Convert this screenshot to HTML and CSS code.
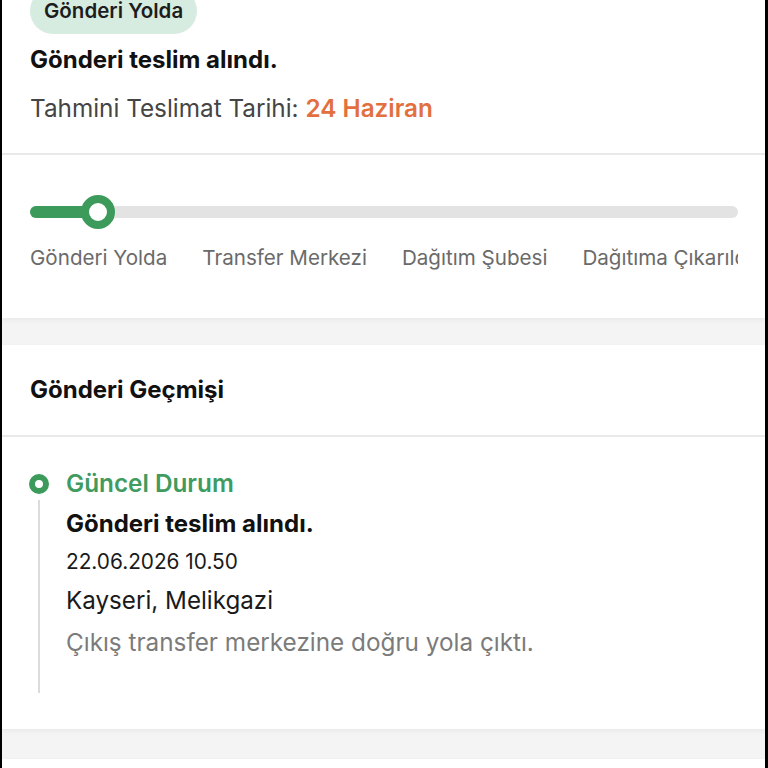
FILE: index.html
```html
<!DOCTYPE html>
<html lang="tr">
<head>
<meta charset="utf-8">
<title>Gönderi Takip</title>
<link rel="stylesheet" href="styles.css">
</head>
<body>
<div class="frame">
  <section class="card card-top">
    <div class="summary">
      <span class="pill">Gönderi Yolda</span>
      <h2 class="title">Gönderi teslim alındı.</h2>
      <p class="eta">Tahmini Teslimat Tarihi: <span class="eta-date">24 Haziran</span></p>
    </div>
    <div class="divider"></div>
    <div class="progress">
      <div class="track">
        <div class="fill" style="width: 68px"></div>
        <div class="knob" style="left: 51px"></div>
      </div>
      <div class="steps">
        <span class="step">Gönderi Yolda</span>
        <span class="step">Transfer Merkezi</span>
        <span class="step">Dağıtım Şubesi</span>
        <span class="step">Dağıtıma Çıkarıldı</span>
      </div>
    </div>
  </section>

  <section class="card card-history">
    <h3 class="section-title">Gönderi Geçmişi</h3>
    <div class="divider"></div>
    <div class="timeline">
      <div class="tl-item">
        <div class="tl-rail">
          <span class="tl-dot"></span>
          <span class="tl-line"></span>
        </div>
        <div class="tl-body">
          <div class="tl-status">Güncel Durum</div>
          <div class="tl-title">Gönderi teslim alındı.</div>
          <div class="tl-date">22.06.2026 10.50</div>
          <div class="tl-place">Kayseri, Melikgazi</div>
          <div class="tl-desc">Çıkış transfer merkezine doğru yola çıktı.</div>
        </div>
      </div>
    </div>
  </section>

  <section class="card card-next"></section>
</div>
</body>
</html>
```

FILE: styles.css
```css
* { box-sizing: border-box; }

html, body {
  margin: 0;
  padding: 0;
  height: 100%;
}

body {
  background: #f4f4f4;
  font-family: Inter, "Noto Sans", sans-serif;
  color: #111;
  overflow: hidden;
}

.frame {
  min-height: 100%;
  border-left: 2px solid #000;
  border-right: 3px solid #000;
  background: #f4f4f4;
  display: flex;
  flex-direction: column;
  gap: 27px;
}

.card {
  background: #fff;
  box-shadow: 0 2px 5px rgba(0, 0, 0, 0.05);
}

.summary {
  padding: 0 28px 30px;
}

.pill {
  display: inline-block;
  margin-top: -12px;
  height: 46px;
  line-height: 46px;
  padding: 0 14px;
  border-radius: 23px;
  background: #d7ece0;
  color: #1d1d1d;
  font-size: 20.5px;
  font-weight: 600;
  vertical-align: top;
}

.title {
  margin: 11px 0 0;
  font-size: 24px;
  line-height: 30px;
  font-weight: 700;
  color: #111;
}

.eta {
  margin: 18px 0 0;
  font-size: 24.3px;
  line-height: 30px;
  color: #454545;
  font-weight: 400;
}

.eta-date {
  color: #e2703f;
  font-weight: 600;
}

.divider {
  height: 2px;
  background: #e9e9e9;
}

.progress {
  padding: 40px 27px 47px 28px;
}

.track {
  position: relative;
  height: 34px;
}

.track::before {
  content: "";
  position: absolute;
  left: 0;
  right: 0;
  top: 11px;
  height: 12px;
  border-radius: 6px;
  background: #e3e3e3;
}

.fill {
  position: absolute;
  left: 0;
  top: 11px;
  height: 12px;
  border-radius: 6px;
  background: #3c9a5b;
}

.knob {
  position: absolute;
  top: 0;
  width: 34px;
  height: 34px;
  border-radius: 50%;
  border: 8px solid #3c9a5b;
  background: #fff;
}

.steps {
  margin-top: 16px;
  display: flex;
  gap: 35px;
  overflow: hidden;
  white-space: nowrap;
}

.step {
  flex: none;
  font-size: 20.6px;
  line-height: 26px;
  color: #6a6a6a;
}

.section-title {
  margin: 0;
  padding: 30px 28px;
  font-size: 24px;
  line-height: 30px;
  font-weight: 700;
  color: #111;
}

.timeline {
  padding: 30px 28px 36px 27px;
}

.tl-item {
  display: flex;
  gap: 17px;
}

.tl-rail {
  width: 20px;
  display: flex;
  flex-direction: column;
  align-items: center;
  padding-top: 7px;
}

.tl-dot {
  width: 20px;
  height: 20px;
  border-radius: 50%;
  border: 6px solid #3c9a5b;
  background: #fff;
  flex: none;
}

.tl-line {
  flex: 1;
  width: 2px;
  margin-top: 6px;
  background: #dcdcdc;
}

.tl-body {
  padding-bottom: 36px;
}

.tl-status {
  font-size: 24.3px;
  line-height: 32px;
  font-weight: 600;
  color: #3f9b5f;
}

.tl-title {
  margin-top: 10px;
  font-size: 24px;
  line-height: 30px;
  font-weight: 700;
  color: #111;
}

.tl-date {
  margin-top: 10px;
  font-size: 20.8px;
  line-height: 26px;
  color: #1a1a1a;
}

.tl-place {
  margin-top: 11px;
  font-size: 24.2px;
  line-height: 30px;
  color: #1a1a1a;
}

.tl-desc {
  margin-top: 11px;
  font-size: 24.3px;
  line-height: 30px;
  color: #7b7b7b;
}

.card-next {
  flex: 1;
  margin-top: 3px;
  min-height: 40px;
}
```
